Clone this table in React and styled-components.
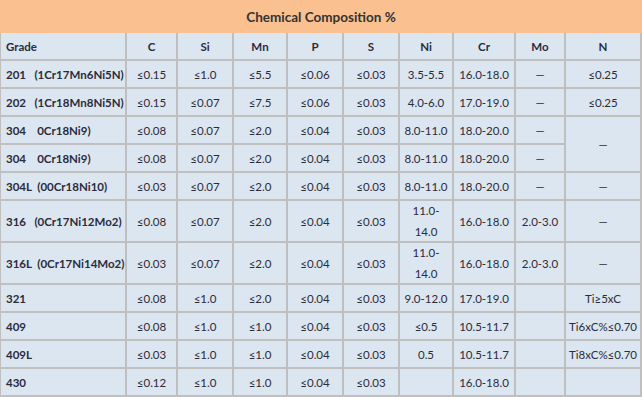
import React from "react";
import styled, { createGlobalStyle } from "styled-components";

const Global = createGlobalStyle`
  html, body { margin: 0; padding: 0; background: #ffffff; }
  body { font-family: Lato, "Open Sans", "Liberation Sans", sans-serif; }
`;

const Wrap = styled.div`
  width: 642px;
`;

const Title = styled.div`
  height: 33px;
  background: #fac08f;
  display: flex;
  align-items: center;
  justify-content: center;
  font-size: 13.5px;
  font-weight: 700;
  color: #333333;
`;

const Grid = styled.div`
  display: grid;
  grid-template-columns: 124px 49px 54px 52px 54px 54px 52px 60px 48px 74px;
  grid-auto-rows: 26px;
  gap: 2px;
  background: #bfbfbf;
  border-left: 1px solid #bfbfbf;
  border-right: 2px solid #bfbfbf;
  border-bottom: 2px solid #bfbfbf;
`;

const Cell = styled.div`
  background: #dce6f1;
  display: flex;
  align-items: center;
  justify-content: ${(p) => (p.$left ? "flex-start" : "center")};
  padding-left: ${(p) => (p.$left ? "5px" : "0")};
  font-size: 11.5px;
  line-height: 21px;
  color: #2b2b3b;
  font-weight: ${(p) => (p.$bold ? 700 : 400)};
  white-space: pre;
  text-align: center;
  grid-row: ${(p) => (p.$span ? `span ${p.$span}` : "auto")};
`;

const heads = ["C", "Si", "Mn", "P", "S", "Ni", "Cr", "Mo", "N"];

const rows = [
  { g: "201   (1Cr17Mn6Ni5N)", v: ["≤0.15", "≤1.0", "≤5.5", "≤0.06", "≤0.03", "3.5-5.5", "16.0-18.0", "—", "≤0.25"] },
  { g: "202   (1Cr18Mn8Ni5N)", v: ["≤0.15", "≤0.07", "≤7.5", "≤0.06", "≤0.03", "4.0-6.0", "17.0-19.0", "—", "≤0.25"] },
  { g: "304    0Cr18Ni9)", v: ["≤0.08", "≤0.07", "≤2.0", "≤0.04", "≤0.03", "8.0-11.0", "18.0-20.0", "—", { t: "—", span: 2 }] },
  { g: "304    0Cr18Ni9)", v: ["≤0.08", "≤0.07", "≤2.0", "≤0.04", "≤0.03", "8.0-11.0", "18.0-20.0", "—", null] },
  { g: "304L  (00Cr18Ni10)", v: ["≤0.03", "≤0.07", "≤2.0", "≤0.04", "≤0.03", "8.0-11.0", "18.0-20.0", "—", "—"] },
  { g: "316   (0Cr17Ni12Mo2)", tall: true, v: ["≤0.08", "≤0.07", "≤2.0", "≤0.04", "≤0.03", "11.0-\n14.0", "16.0-18.0", "2.0-3.0", "—"] },
  { g: "316L  (0Cr17Ni14Mo2)", tall: true, v: ["≤0.03", "≤0.07", "≤2.0", "≤0.04", "≤0.03", "11.0-\n14.0", "16.0-18.0", "2.0-3.0", "—"] },
  { g: "321", v: ["≤0.08", "≤1.0", "≤2.0", "≤0.04", "≤0.03", "9.0-12.0", "17.0-19.0", "", "Ti≥5xC"] },
  { g: "409", v: ["≤0.08", "≤1.0", "≤1.0", "≤0.04", "≤0.03", "≤0.5", "10.5-11.7", "", "Ti6xC%≤0.70"] },
  { g: "409L", v: ["≤0.03", "≤1.0", "≤1.0", "≤0.04", "≤0.03", "0.5", "10.5-11.7", "", "Ti8xC%≤0.70"] },
  { g: "430", v: ["≤0.12", "≤1.0", "≤1.0", "≤0.04", "≤0.03", "", "16.0-18.0", "", ""] },
];

const rowTemplate = ["26px", ...rows.map((r) => (r.tall ? "40px" : "26px"))].join(" ");

export default function App() {
  return (
    <Wrap>
      <Global />
      <Title>Chemical Composition %</Title>
      <Grid style={{ gridTemplateRows: rowTemplate }}>
        <Cell $left $bold>Grade</Cell>
        {heads.map((h) => (
          <Cell key={h} $bold>{h}</Cell>
        ))}
        {rows.map((r, i) => (
          <React.Fragment key={i}>
            <Cell $left $bold>{r.g}</Cell>
            {r.v.map((v, j) => {
              if (v === null) return null;
              if (typeof v === "object") {
                return (
                  <Cell key={j} $span={v.span}>{v.t}</Cell>
                );
              }
              return <Cell key={j}>{v}</Cell>;
            })}
          </React.Fragment>
        ))}
      </Grid>
    </Wrap>
  );
}
